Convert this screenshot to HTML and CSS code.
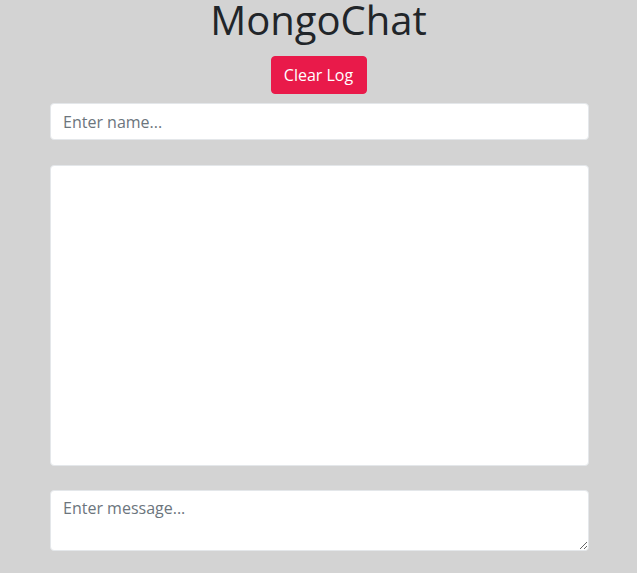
FILE: index.html
```html
<!DOCTYPE html>
<html lang="en">
<head>
<meta charset="utf-8">
<title>MongoChat</title>
<link rel="stylesheet" href="styles.css">
</head>
<body>
<div class="container">
  <header class="header">
    <h1 class="title">MongoChat</h1>
    <button class="btn-clear" type="button">Clear Log</button>
  </header>
  <div class="chat">
    <input class="field" type="text" placeholder="Enter name...">
    <div class="messages"></div>
    <textarea class="field message" placeholder="Enter message..."></textarea>
  </div>
</div>
</body>
</html>
```

FILE: styles.css
```css
* { box-sizing: border-box; }
html, body {
  margin: 0;
  padding: 0;
  background: #d3d3d3;
  font-family: "Open Sans", "Liberation Sans", sans-serif;
  color: #212529;
}
.header {
  display: flex;
  flex-direction: column;
  align-items: center;
}
.title {
  margin: 0 0 17px;
  font-size: 40px;
  font-weight: 400;
  line-height: 39px;
}
.btn-clear {
  height: 38px;
  width: 96px;
  padding: 0;
  border: 1px solid #e91a4a;
  border-radius: 4px;
  background: #e91a4a;
  color: #fff;
  font-family: inherit;
  font-size: 16px;
  line-height: 24px;
}
.chat {
  display: flex;
  flex-direction: column;
  margin-top: 9px;
  padding: 0 48px 0 50px;
}
.field {
  display: block;
  width: 100%;
  height: 37px;
  padding: 5px 12px;
  border: 1px solid #e4e7ea;
  border-radius: 4px;
  background: #fff;
  font-family: inherit;
  font-size: 16px;
  line-height: 24px;
  color: #495057;
}
.field::placeholder { color: #6c757d; opacity: 1; }
.messages {
  height: 301px;
  margin: 25px 0 24px;
  background: #fff;
  border: 1px solid #e4e7ea;
  border-radius: 4px;
}
.message {
  height: 61px;
  resize: vertical;
}
```
